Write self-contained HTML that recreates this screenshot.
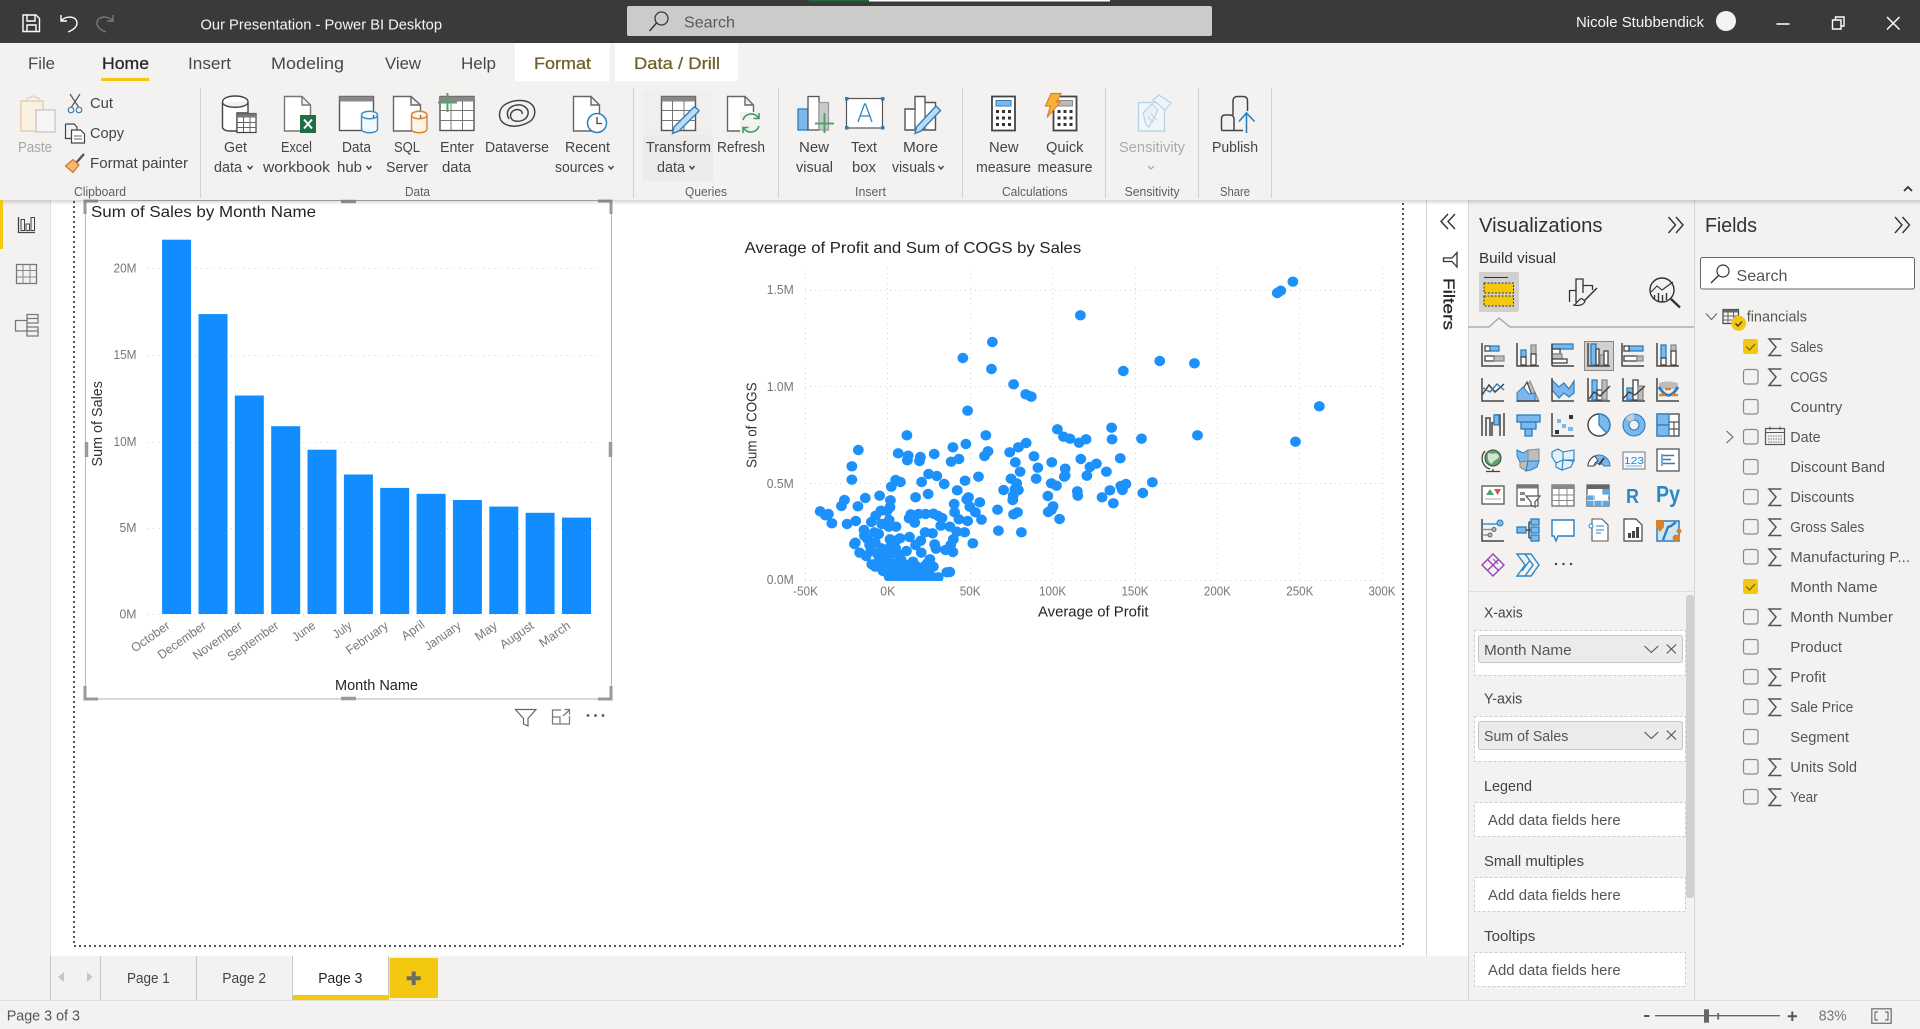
<!DOCTYPE html>
<html lang="en"><head><meta charset="utf-8"><title>Our Presentation - Power BI Desktop</title>
<style>
html,body{margin:0;padding:0;width:1920px;height:1029px;overflow:hidden;background:#fff}
svg{display:block}
text{font-family:"Liberation Sans",sans-serif;fill:#444;font-size:14px}
.tw{fill:#f5f5f5;font-size:14.5px}
.t{font-size:16.5px;fill:#4a4847}
.fm{font-size:16.5px;fill:#6f5f28}
.g{font-size:12.5px;fill:#605e5c}
.f{font-size:14.5px;fill:#555}
.p{font-size:14.5px;fill:#444}
.l{font-size:12.5px;fill:#777}
.c{font-size:14.5px;fill:#333}
.h{font-size:20px;fill:#323130}
.k,.k *{fill:none;stroke:#444;stroke-width:1.5}
.w{fill:#fff;stroke:#444;stroke-width:1.3}
.B{fill:#7ab8ee;stroke:#2b7fbd;stroke-width:1.3}
.G{fill:#bdbdbd;stroke:#858585;stroke-width:1.2}
.bl{fill:none;stroke:#2b7fbd;stroke-width:1.4}
.cb{fill:none;stroke:#8a8886;stroke-width:1.2}
.cy{fill:#f2c811}
.s{fill:none;stroke:#555;stroke-width:1.5}
.d{fill:#fff;stroke:#d0cecc;stroke-width:1;stroke-dasharray:3 2}
.pl{fill:#edebe9;stroke:#c8c6c4;stroke-width:1}
.sc ellipse{rx:12.4px;ry:15.6px;fill:#1c90fb}
</style></head><body>
<svg width="1920" height="1029" viewBox="0 0 1920 1029" xmlns="http://www.w3.org/2000/svg">
<!-- backgrounds -->
<rect width="1920" height="1029" fill="#f3f2f1"/>
<rect x="51" y="200" width="1417" height="756" fill="#fff"/>
<path d="M1426.5 200V956M1468.5 200V1000M1694.5 200V1000" stroke="#d8d6d4" fill="none"/>
<path d="M50.5 200V1000" stroke="#e4e2e0"/>
<path d="M74 201V946H1403V201" fill="none" stroke="#555" stroke-width="2" stroke-dasharray="2 3"/>

<!-- chart 1 -->
<rect x="85.5" y="200.5" width="526" height="498.5" fill="#fff" stroke="#b5b5b5"/>
<path d="M85 214V201H98M598 201H611V214M85 686V699H98M598 699H611V686" fill="none" stroke="#9a9a9a" stroke-width="3"/>
<path d="M341 201.5H356M341 698.5H356M86.5 442V457M610.5 442V457" stroke="#9a9a9a" stroke-width="3.5"/>
<text x="91" y="217" textLength="225" lengthAdjust="spacingAndGlyphs" class="c" style="font-size:16px;fill:#252423">Sum of Sales by Month Name</text>
<path d="M147 268.5H603M147 355.5H603M147 442.5H603M147 528.5H603M147 614.5H603" stroke="#d4d4d4" stroke-dasharray="1 5"/>
<g fill="#118dff">
<rect x="162.1" y="239.7" width="29" height="374.3"/><rect x="198.5" y="314.1" width="29" height="299.9"/><rect x="234.8" y="395.5" width="29" height="218.5"/><rect x="271.2" y="426.2" width="29" height="187.8"/><rect x="307.5" y="449.7" width="29" height="164.3"/><rect x="343.9" y="474.5" width="29" height="139.5"/><rect x="380.2" y="487.9" width="29" height="126.1"/><rect x="416.6" y="493.8" width="29" height="120.2"/><rect x="452.9" y="500" width="29" height="114"/><rect x="489.3" y="506.6" width="29" height="107.4"/><rect x="525.6" y="512.8" width="29" height="101.2"/><rect x="562" y="517.6" width="29" height="96.4"/>
</g>
<g class="l" text-anchor="end">
<text x="136.5" y="272.5" class="l" text-anchor="end" textLength="23" lengthAdjust="spacingAndGlyphs">20M</text>
<text x="136.5" y="359" class="l" text-anchor="end" textLength="23" lengthAdjust="spacingAndGlyphs">15M</text>
<text x="136.5" y="446" class="l" text-anchor="end" textLength="23" lengthAdjust="spacingAndGlyphs">10M</text>
<text x="136.5" y="532" class="l" text-anchor="end" textLength="17" lengthAdjust="spacingAndGlyphs">5M</text>
<text x="136.5" y="618.5" class="l" text-anchor="end" textLength="17" lengthAdjust="spacingAndGlyphs">0M</text>
</g>
<text x="102" y="466.5" transform="rotate(-90 102 466.5)" textLength="85.5" lengthAdjust="spacingAndGlyphs" class="c" style="font-size:15px">Sum of Sales</text>
<text x="335" y="690" textLength="83" lengthAdjust="spacingAndGlyphs" class="c" style="font-size:15px;fill:#252423">Month Name</text>
<text class="l" text-anchor="end" x="170.8" y="627.5" transform="rotate(-35 170.8 627.5)" textLength="44" lengthAdjust="spacingAndGlyphs">October</text>
<text class="l" text-anchor="end" x="207.2" y="627.5" transform="rotate(-35 207.2 627.5)" textLength="56" lengthAdjust="spacingAndGlyphs">December</text>
<text class="l" text-anchor="end" x="243.2" y="627.5" transform="rotate(-35 243.2 627.5)" textLength="57" lengthAdjust="spacingAndGlyphs">November</text>
<text class="l" text-anchor="end" x="279.6" y="627.5" transform="rotate(-35 279.6 627.5)" textLength="59" lengthAdjust="spacingAndGlyphs">September</text>
<text class="l" text-anchor="end" x="316.3" y="627.5" transform="rotate(-35 316.3 627.5)" textLength="25" lengthAdjust="spacingAndGlyphs">June</text>
<text class="l" text-anchor="end" x="352.7" y="627.5" transform="rotate(-35 352.7 627.5)" textLength="20" lengthAdjust="spacingAndGlyphs">July</text>
<text class="l" text-anchor="end" x="389" y="627.5" transform="rotate(-35 389 627.5)" textLength="48" lengthAdjust="spacingAndGlyphs">February</text>
<text class="l" text-anchor="end" x="425.5" y="626.5" transform="rotate(-35 425.5 626.5)" textLength="25" lengthAdjust="spacingAndGlyphs">April</text>
<text class="l" text-anchor="end" x="461.8" y="627.5" transform="rotate(-35 461.8 627.5)" textLength="41" lengthAdjust="spacingAndGlyphs">January</text>
<text class="l" text-anchor="end" x="498.2" y="627.5" transform="rotate(-35 498.2 627.5)" textLength="24" lengthAdjust="spacingAndGlyphs">May</text>
<text class="l" text-anchor="end" x="534.6" y="627.5" transform="rotate(-35 534.6 627.5)" textLength="38" lengthAdjust="spacingAndGlyphs">August</text>
<text class="l" text-anchor="end" x="571.4" y="627.5" transform="rotate(-35 571.4 627.5)" textLength="35" lengthAdjust="spacingAndGlyphs">March</text>
<!-- visual header -->
<path d="M515.5 709.5H536L528 718.5V726L523.5 724V718.5Z" fill="none" stroke="#666" stroke-width="1.2"/>
<path d="M561 710H552.5V724H569.5V716M552.5 717H560V724M563 716L569.5 710M564.5 709.5H569.5V714.5" fill="none" stroke="#777" stroke-width="1.2"/>
<circle cx="588" cy="715.5" r="1.4" fill="#555"/><circle cx="595.5" cy="715.5" r="1.4" fill="#555"/><circle cx="603" cy="715.5" r="1.4" fill="#555"/>

<!-- chart 2 -->
<text x="744.7" y="252.8" textLength="336.5" lengthAdjust="spacingAndGlyphs" class="c" style="font-size:16px;fill:#252423">Average of Profit and Sum of COGS by Sales</text>
<path d="M805.5 268V580M887.5 268V580M970.5 268V580M1052.5 268V580M1135.5 268V580M1217.5 268V580M1299.5 268V580M1382.5 268V580" stroke="#d6d6d6" stroke-dasharray="1 4"/>
<path d="M805 290.5H1382M805 386.5H1382M805 483.5H1382M805 580.5H1382" stroke="#d6d6d6" stroke-dasharray="1 4"/>
<svg class="sc" x="720" y="220" width="680" height="410" viewBox="0 0 1568 1230" preserveAspectRatio="none">
<ellipse cx="1321" cy="185"/><ellipse cx="1293" cy="212"/><ellipse cx="1285" cy="219"/><ellipse cx="831" cy="286"/><ellipse cx="628" cy="366"/><ellipse cx="560" cy="414"/><ellipse cx="626" cy="447"/><ellipse cx="1014" cy="423"/><ellipse cx="1094" cy="430"/><ellipse cx="930" cy="453"/><ellipse cx="677" cy="493"/><ellipse cx="705" cy="523"/><ellipse cx="716" cy="529"/><ellipse cx="718" cy="530"/><ellipse cx="1382" cy="559"/><ellipse cx="571" cy="572"/><ellipse cx="1101" cy="646"/><ellipse cx="1327" cy="665"/><ellipse cx="903" cy="623"/><ellipse cx="778" cy="628"/><ellipse cx="792" cy="650"/><ellipse cx="807" cy="656"/><ellipse cx="828" cy="668"/><ellipse cx="844" cy="658"/><ellipse cx="904" cy="658"/><ellipse cx="972" cy="656"/><ellipse cx="431" cy="646"/><ellipse cx="613" cy="646"/><ellipse cx="567" cy="672"/><ellipse cx="706" cy="669"/><ellipse cx="688" cy="682"/><ellipse cx="668" cy="697"/><ellipse cx="537" cy="682"/><ellipse cx="319" cy="690"/><ellipse cx="411" cy="700"/><ellipse cx="434" cy="707"/><ellipse cx="462" cy="711"/><ellipse cx="494" cy="702"/><ellipse cx="618" cy="694"/><ellipse cx="610" cy="708"/><ellipse cx="724" cy="709"/><ellipse cx="681" cy="727"/><ellipse cx="765" cy="727"/><ellipse cx="832" cy="717"/><ellipse cx="923" cy="715"/><ellipse cx="868" cy="731"/><ellipse cx="853" cy="741"/><ellipse cx="891" cy="755"/><ellipse cx="432" cy="721"/><ellipse cx="460" cy="723"/><ellipse cx="533" cy="725"/><ellipse cx="551" cy="717"/><ellipse cx="304" cy="739"/><ellipse cx="304" cy="779"/><ellipse cx="692" cy="755"/><ellipse cx="733" cy="743"/><ellipse cx="796" cy="746"/><ellipse cx="796" cy="767"/><ellipse cx="794" cy="770"/><ellipse cx="846" cy="767"/><ellipse cx="481" cy="762"/><ellipse cx="500" cy="768"/><ellipse cx="405" cy="780"/><ellipse cx="416" cy="786"/><ellipse cx="596" cy="770"/><ellipse cx="565" cy="782"/><ellipse cx="671" cy="776"/><ellipse cx="729" cy="776"/><ellipse cx="764" cy="790"/><ellipse cx="776" cy="797"/><ellipse cx="936" cy="792"/><ellipse cx="924" cy="798"/><ellipse cx="928" cy="810"/><ellipse cx="997" cy="787"/><ellipse cx="465" cy="786"/><ellipse cx="395" cy="800"/><ellipse cx="517" cy="792"/><ellipse cx="547" cy="811"/><ellipse cx="684" cy="790"/><ellipse cx="680" cy="808"/><ellipse cx="688" cy="810"/><ellipse cx="654" cy="810"/><ellipse cx="824" cy="814"/><ellipse cx="825" cy="827"/><ellipse cx="899" cy="811"/><ellipse cx="975" cy="819"/><ellipse cx="881" cy="832"/><ellipse cx="907" cy="850"/><ellipse cx="756" cy="828"/><ellipse cx="676" cy="827"/><ellipse cx="675" cy="840"/><ellipse cx="368" cy="827"/><ellipse cx="335" cy="834"/><ellipse cx="287" cy="840"/><ellipse cx="280" cy="858"/><ellipse cx="318" cy="859"/><ellipse cx="393" cy="841"/><ellipse cx="451" cy="832"/><ellipse cx="480" cy="822"/><ellipse cx="573" cy="832"/><ellipse cx="569" cy="838"/><ellipse cx="599" cy="847"/><ellipse cx="540" cy="852"/><ellipse cx="576" cy="860"/><ellipse cx="392" cy="862"/><ellipse cx="371" cy="872"/><ellipse cx="385" cy="873"/><ellipse cx="231" cy="874"/><ellipse cx="243" cy="886"/><ellipse cx="250" cy="882"/><ellipse cx="258" cy="910"/><ellipse cx="293" cy="912"/><ellipse cx="313" cy="903"/><ellipse cx="359" cy="887"/><ellipse cx="349" cy="906"/><ellipse cx="373" cy="912"/><ellipse cx="390" cy="900"/><ellipse cx="406" cy="920"/><ellipse cx="389" cy="920"/><ellipse cx="440" cy="883"/><ellipse cx="436" cy="895"/><ellipse cx="449" cy="908"/><ellipse cx="458" cy="882"/><ellipse cx="474" cy="882"/><ellipse cx="492" cy="881"/><ellipse cx="503" cy="888"/><ellipse cx="512" cy="894"/><ellipse cx="509" cy="917"/><ellipse cx="541" cy="877"/><ellipse cx="551" cy="898"/><ellipse cx="571" cy="903"/><ellipse cx="589" cy="877"/><ellipse cx="603" cy="899"/><ellipse cx="640" cy="869"/><ellipse cx="677" cy="883"/><ellipse cx="686" cy="877"/><ellipse cx="768" cy="859"/><ellipse cx="764" cy="870"/><ellipse cx="757" cy="876"/><ellipse cx="783" cy="897"/><ellipse cx="642" cy="932"/><ellipse cx="695" cy="937"/><ellipse cx="332" cy="930"/><ellipse cx="333" cy="947"/><ellipse cx="356" cy="937"/><ellipse cx="366" cy="942"/><ellipse cx="340" cy="957"/><ellipse cx="345" cy="975"/><ellipse cx="358" cy="967"/><ellipse cx="312" cy="968"/><ellipse cx="310" cy="972"/><ellipse cx="322" cy="998"/><ellipse cx="337" cy="1008"/><ellipse cx="350" cy="1033"/><ellipse cx="363" cy="1002"/><ellipse cx="358" cy="1040"/><ellipse cx="376" cy="1053"/><ellipse cx="392" cy="958"/><ellipse cx="405" cy="962"/><ellipse cx="415" cy="955"/><ellipse cx="437" cy="951"/><ellipse cx="463" cy="962"/><ellipse cx="473" cy="937"/><ellipse cx="490" cy="940"/><ellipse cx="530" cy="920"/><ellipse cx="546" cy="935"/><ellipse cx="564" cy="937"/><ellipse cx="583" cy="970"/><ellipse cx="538" cy="958"/><ellipse cx="532" cy="975"/><ellipse cx="520" cy="990"/><ellipse cx="537" cy="996"/><ellipse cx="495" cy="973"/><ellipse cx="498" cy="986"/><ellipse cx="451" cy="975"/><ellipse cx="464" cy="998"/><ellipse cx="430" cy="993"/><ellipse cx="393" cy="980"/><ellipse cx="395" cy="1000"/><ellipse cx="375" cy="1005"/><ellipse cx="382" cy="1020"/><ellipse cx="398" cy="1030"/><ellipse cx="418" cy="1020"/><ellipse cx="445" cy="1025"/><ellipse cx="484" cy="1018"/><ellipse cx="478" cy="1030"/><ellipse cx="470" cy="1040"/><ellipse cx="523" cy="1057"/><ellipse cx="530" cy="1056"/><ellipse cx="503" cy="1072"/>
<ellipse cx="365" cy="1025"/><ellipse cx="385" cy="1045"/><ellipse cx="405" cy="1045"/><ellipse cx="420" cy="1040"/><ellipse cx="435" cy="1050"/><ellipse cx="455" cy="1052"/><ellipse cx="475" cy="1052"/><ellipse cx="348" cy="992"/><ellipse cx="372" cy="985"/><ellipse cx="405" cy="985"/><ellipse cx="380" cy="1000"/><ellipse cx="412" cy="1005"/><ellipse cx="372" cy="1035"/><ellipse cx="392" cy="1052"/><ellipse cx="430" cy="1035"/><ellipse cx="452" cy="1038"/><ellipse cx="492" cy="1040"/><ellipse cx="390" cy="1070"/><ellipse cx="402" cy="1068"/><ellipse cx="414" cy="1068"/><ellipse cx="426" cy="1068"/><ellipse cx="438" cy="1068"/><ellipse cx="450" cy="1068"/><ellipse cx="462" cy="1068"/><ellipse cx="474" cy="1068"/><ellipse cx="486" cy="1068"/><ellipse cx="396" cy="1076"/><ellipse cx="408" cy="1076"/><ellipse cx="420" cy="1076"/><ellipse cx="432" cy="1076"/><ellipse cx="444" cy="1076"/><ellipse cx="456" cy="1076"/><ellipse cx="468" cy="1076"/><ellipse cx="480" cy="1076"/><ellipse cx="490" cy="1076"/>
</svg>
<rect x="860" y="581" width="85" height="7" fill="#fff"/>
<text class="l" text-anchor="end" x="793.7" y="294" textLength="27" lengthAdjust="spacingAndGlyphs">1.5M</text>
<text class="l" text-anchor="end" x="793.7" y="391" textLength="27" lengthAdjust="spacingAndGlyphs">1.0M</text>
<text class="l" text-anchor="end" x="793.7" y="488" textLength="27" lengthAdjust="spacingAndGlyphs">0.5M</text>
<text class="l" text-anchor="end" x="793.7" y="584" textLength="27" lengthAdjust="spacingAndGlyphs">0.0M</text>
<text class="l" text-anchor="middle" x="805.5" y="595.5" textLength="25" lengthAdjust="spacingAndGlyphs">-50K</text>
<text class="l" text-anchor="middle" x="887.8" y="595.5" textLength="15" lengthAdjust="spacingAndGlyphs">0K</text>
<text class="l" text-anchor="middle" x="970.2" y="595.5" textLength="21" lengthAdjust="spacingAndGlyphs">50K</text>
<text class="l" text-anchor="middle" x="1052.6" y="595.5" textLength="27" lengthAdjust="spacingAndGlyphs">100K</text>
<text class="l" text-anchor="middle" x="1135" y="595.5" textLength="27" lengthAdjust="spacingAndGlyphs">150K</text>
<text class="l" text-anchor="middle" x="1217.4" y="595.5" textLength="27" lengthAdjust="spacingAndGlyphs">200K</text>
<text class="l" text-anchor="middle" x="1299.8" y="595.5" textLength="27" lengthAdjust="spacingAndGlyphs">250K</text>
<text class="l" text-anchor="middle" x="1382" y="595.5" textLength="27" lengthAdjust="spacingAndGlyphs">300K</text>
<text x="1038" y="616.5" textLength="110.5" lengthAdjust="spacingAndGlyphs" class="c" style="font-size:15px;fill:#252423">Average of Profit</text>
<text x="756.5" y="468" transform="rotate(-90 756.5 468)" textLength="85.5" lengthAdjust="spacingAndGlyphs" class="c" style="font-size:15px">Sum of COGS</text>

<!-- ribbon shadow -->
<defs><linearGradient id="sh" x1="0" y1="0" x2="0" y2="1"><stop offset="0" stop-color="#000" stop-opacity=".16"/><stop offset="1" stop-color="#000" stop-opacity="0"/></linearGradient></defs>
<rect y="200" width="1920" height="5" fill="url(#sh)"/>
<!-- title bar -->
<rect width="1920" height="43" fill="#3b3a39"/>
<rect x="809" width="60" height="1.5" fill="#1d6b2c"/><rect x="869" width="241" height="1.5" fill="#fff"/>
<rect x="627" y="6" width="585" height="30" rx="2" fill="#cbcbc9"/>
<g fill="none" stroke="#fff" stroke-width="1.4">
<path d="M23 15H36L39.5 18.5V31.5H23ZM27 15V21H35V15M27 31.5V25H36V31.5"/>
<path d="M61 15V21H67M61 21C66 15 77 16 77 23C77 27 73 30 68 32"/>
</g>
<path d="M113 15V21H107M113 21C108 15 97 16 97 23C97 27 101 30 106 32" fill="none" stroke="#7a7978" stroke-width="1.4"/>
<text x="200.5" y="29.5" textLength="241.5" lengthAdjust="spacingAndGlyphs" class="tw">Our Presentation - Power BI Desktop</text>
<circle cx="661.5" cy="18.5" r="6.5" fill="none" stroke="#3b3a39" stroke-width="1.3"/><path d="M656.5 23L649.5 31" stroke="#3b3a39" stroke-width="1.5"/>
<text x="684" y="27.5" textLength="51" lengthAdjust="spacingAndGlyphs" style="font-size:16px;fill:#5a5958">Search</text>
<text x="1576" y="27" textLength="128" lengthAdjust="spacingAndGlyphs" class="tw">Nicole Stubbendick</text>
<ellipse cx="1726" cy="21" rx="10" ry="10" fill="#f3f3f3"/>
<path d="M1776.5 24H1789.5" stroke="#fff" stroke-width="1.5"/>
<path d="M1832.5 20H1841V29H1832.5ZM1835.5 20V17H1844V26H1841" fill="none" stroke="#fff" stroke-width="1.4"/>
<path d="M1887 17L1899.5 29.5M1899.5 17L1887 29.5" stroke="#fff" stroke-width="1.5"/>

<!-- tabs -->
<rect x="515" y="43" width="95" height="38" fill="#fff"/><rect x="615" y="43" width="123" height="38" fill="#fff"/>
<rect x="101" y="78" width="48" height="3" fill="#f2c811"/>
<text x="28" y="69" textLength="27" lengthAdjust="spacingAndGlyphs" class="t">File</text>
<text x="102" y="69" textLength="47" lengthAdjust="spacingAndGlyphs" class="t" style="fill:#252423;stroke:#252423;stroke-width:.25">Home</text>
<text x="188" y="69" textLength="43" lengthAdjust="spacingAndGlyphs" class="t">Insert</text>
<text x="271" y="69" textLength="73" lengthAdjust="spacingAndGlyphs" class="t">Modeling</text>
<text x="385" y="69" textLength="36" lengthAdjust="spacingAndGlyphs" class="t">View</text>
<text x="461" y="69" textLength="35" lengthAdjust="spacingAndGlyphs" class="t">Help</text>
<text x="534" y="69" textLength="57" lengthAdjust="spacingAndGlyphs" class="fm" style="stroke:#6f5f28;stroke-width:.25">Format</text>
<text x="634" y="69" textLength="86" lengthAdjust="spacingAndGlyphs" class="fm" style="stroke:#6f5f28;stroke-width:.25">Data / Drill</text>

<!-- ribbon separators -->
<path d="M200.5 88V198M633.5 88V198M778.5 88V198M962.5 88V198M1105.5 88V198M1198.5 88V198M1271.5 88V198" stroke="#d2d0ce"/>
<rect x="643" y="91" width="70" height="44" fill="#f0efee"/><rect x="643" y="135" width="70" height="46" fill="#ecebe9"/>

<!-- clipboard group -->
<rect x="21" y="101" width="22" height="30" fill="#faf1e4" stroke="#e9cda8" stroke-width="1.5"/><path d="M27 101V98H30L32 96H34L36 98H39V101Z" fill="#f6f2ec" stroke="#d9c9b3"/><rect x="36" y="110" width="19" height="22" fill="#f6f6f6" stroke="#ccc" stroke-width="1.5"/>
<path d="M70 94L78.5 107M80 94L71.5 107" stroke="#555" fill="none" stroke-width="1.2"/><circle cx="71" cy="110" r="2.8" fill="none" stroke="#2b7fbd" stroke-width="1.2"/><circle cx="79" cy="110" r="2.8" fill="none" stroke="#2b7fbd" stroke-width="1.2"/>
<path d="M65.5 124H74L77 127V130M71 138.5H65.5V124" fill="none" stroke="#444" stroke-width="1.2"/><path d="M71.5 130H80.5L84.5 134V143H71.5Z" fill="#fff" stroke="#444" stroke-width="1.2"/><path d="M74 136H82M74 139H82" stroke="#666"/>
<path d="M84 154L76 163" stroke="#555" stroke-width="2.4"/><path d="M65.5 166L73 159.5L79 165L73 172.5Z" fill="#f7b76f" stroke="#c9792d" stroke-width="1.2"/>
<text x="18" y="152" textLength="34" lengthAdjust="spacingAndGlyphs" class="p" style="fill:#a6a6a6">Paste</text>
<text x="90" y="108" textLength="23" lengthAdjust="spacingAndGlyphs" class="p">Cut</text>
<text x="90" y="138" textLength="34" lengthAdjust="spacingAndGlyphs" class="p">Copy</text>
<text x="90" y="168" textLength="98" lengthAdjust="spacingAndGlyphs" class="p">Format painter</text>
<text x="74" y="196" textLength="52" lengthAdjust="spacingAndGlyphs" class="g">Clipboard</text>

<!-- data group icons -->
<path d="M222.5 102C222.5 94 248 94 248 102V113H237V131H230C225 131 222.5 129 222.5 127ZM222.5 102C222.5 109 248 109 248 102" fill="#fff" stroke="#444" stroke-width="1.4"/>
<rect x="237" y="113.5" width="19" height="19" fill="#fff" stroke="#444" stroke-width="1.2"/><rect x="237" y="113.5" width="19" height="4" fill="#777"/><path d="M243.5 117V132M250 117V132M237 122.5H256M237 127.5H256" stroke="#666"/>
<path d="M284.5 96.5H302L310.5 105V131H284.5ZM302 96.5V105H310.5" fill="#fff" stroke="#777" stroke-width="1.4"/>
<rect x="300" y="115" width="16" height="18" fill="#1d7044"/><path d="M304 119.5L312 128.5M312 119.5L304 128.5" stroke="#fff" stroke-width="2"/>
<rect x="339.5" y="96.5" width="34" height="34" fill="#fff" stroke="#555" stroke-width="1.4"/><rect x="339.5" y="96.5" width="34" height="5" fill="#8a8886"/>
<path d="M361.5 115C361.5 110 377.5 110 377.5 115V129C377.5 134 361.5 134 361.5 129ZM361.5 115C361.5 120 377.5 120 377.5 115" fill="#f1f8fe" stroke="#3a8cc6" stroke-width="1.4"/>
<path d="M393.5 96.5H411L420.5 105V131H393.5ZM411 96.5V105H420.5" fill="#fff" stroke="#666" stroke-width="1.4"/>
<path d="M411.5 115C411.5 110 427 110 427 115V129C427 134 411.5 134 411.5 129ZM411.5 115C411.5 120 427 120 427 115" fill="#fdf3e6" stroke="#d9822b" stroke-width="1.4"/>
<rect x="440" y="96.5" width="34" height="34" fill="#fff" stroke="#555" stroke-width="1.4"/><rect x="440" y="96.5" width="34" height="5" fill="#8a8886"/><path d="M451 101V130M462.5 101V130M440 110.5H474M440 120.5H474" stroke="#777"/>
<path d="M447.5 93V112M438 102.5H457" stroke="#4fa36a" stroke-width="2"/>
<g fill="none" stroke="#444" stroke-width="1.5"><path d="M505 124C497 120 498 108 506 104C513 100 524 99 530 103C537 108 536 118 529 122C522 126 512 128 505 124Z"/><path d="M509 119C505 112 509 106 517 105C524 104 529 109 528 114C527 120 520 122 515 121C510 120 509 114 513 111C517 108 523 110 522 114"/></g>
<path d="M573.5 96.5H591L599.5 105V131H573.5ZM591 96.5V105H599.5" fill="#fff" stroke="#666" stroke-width="1.4"/>
<circle cx="597" cy="123" r="9.5" fill="#fff" stroke="#2b7fbd" stroke-width="1.5"/><path d="M597 117V123.5H602" fill="none" stroke="#444" stroke-width="1.3"/>
<text x="224" y="152" textLength="23" lengthAdjust="spacingAndGlyphs" class="p">Get</text><text x="214" y="172" textLength="28" lengthAdjust="spacingAndGlyphs" class="p">data</text>
<text x="281" y="152" textLength="31" lengthAdjust="spacingAndGlyphs" class="p">Excel</text><text x="263" y="172" textLength="67" lengthAdjust="spacingAndGlyphs" class="p">workbook</text>
<text x="342" y="152" textLength="29" lengthAdjust="spacingAndGlyphs" class="p">Data</text><text x="337" y="172" textLength="25" lengthAdjust="spacingAndGlyphs" class="p">hub</text>
<text x="394" y="152" textLength="26" lengthAdjust="spacingAndGlyphs" class="p">SQL</text><text x="386" y="172" textLength="42" lengthAdjust="spacingAndGlyphs" class="p">Server</text>
<text x="440" y="152" textLength="34" lengthAdjust="spacingAndGlyphs" class="p">Enter</text><text x="442" y="172" textLength="29" lengthAdjust="spacingAndGlyphs" class="p">data</text>
<text x="485" y="152" textLength="64" lengthAdjust="spacingAndGlyphs" class="p">Dataverse</text>
<text x="565" y="152" textLength="45" lengthAdjust="spacingAndGlyphs" class="p">Recent</text><text x="555" y="172" textLength="49" lengthAdjust="spacingAndGlyphs" class="p">sources</text>
<g fill="none" stroke="#444" stroke-width="1.4"><path d="M247.5 166L250 169L252.5 166M366.5 166L369 169L371.5 166M608.5 166L611 169L613.5 166M689.5 166L692 169L694.5 166M938.5 166L941 169L943.5 166"/></g>
<text x="405" y="196" textLength="25" lengthAdjust="spacingAndGlyphs" class="g">Data</text>

<!-- queries -->
<rect x="661.5" y="96.5" width="34" height="34" fill="#fff" stroke="#555" stroke-width="1.4"/><rect x="661.5" y="96.5" width="34" height="5" fill="#8a8886"/><path d="M672.5 101V130M684 101V130M661.5 110.5H695.5M661.5 120.5H695.5" stroke="#777"/>
<path d="M697 108.5L699 111L679 131L672.5 133.5L674 127L694 107Z" fill="#bcdcf5" stroke="#2b7fbd" stroke-width="1.4"/>
<path d="M727.5 96.5H745L753.5 105V131H727.5ZM745 96.5V105H753.5" fill="#fff" stroke="#666" stroke-width="1.4"/>
<rect x="740" y="112" width="22" height="22" fill="#f3f2f1"/>
<path d="M743 120A8.5 8.5 0 0 1 758 117.5M759 126A8.5 8.5 0 0 1 744 128.5M759 113V118.5H753.5M743 133V127.5H748.5" fill="none" stroke="#3f9c5f" stroke-width="1.6"/>
<text x="646" y="152" textLength="65" lengthAdjust="spacingAndGlyphs" class="p">Transform</text><text x="657" y="172" textLength="28" lengthAdjust="spacingAndGlyphs" class="p">data</text>
<text x="717" y="152" textLength="48" lengthAdjust="spacingAndGlyphs" class="p">Refresh</text>
<text x="685" y="196" textLength="42" lengthAdjust="spacingAndGlyphs" class="g">Queries</text>

<!-- insert -->
<rect x="798" y="109" width="10" height="21" fill="#7ab8ee" stroke="#2b7fbd" stroke-width="1.3"/><rect x="808" y="96.5" width="11" height="33.5" fill="#fff" stroke="#555" stroke-width="1.3"/><rect x="819" y="102.5" width="9.5" height="27.5" fill="#c9c9c9" stroke="#999" stroke-width="1.2"/>
<path d="M824.5 113V133M815 123.5H834" stroke="#4fa36a" stroke-width="2"/>
<rect x="846.5" y="98.5" width="36" height="29.5" fill="#fff" stroke="#555" stroke-width="1.2"/><rect x="845" y="97" width="3.5" height="3.5" fill="#2b7fbd"/><rect x="881" y="97" width="3.5" height="3.5" fill="#2b7fbd"/><rect x="845" y="126" width="3.5" height="3.5" fill="#2b7fbd"/><rect x="881" y="126" width="3.5" height="3.5" fill="#2b7fbd"/>
<path d="M858 122L864.5 104H865.5L872 122M860.5 116H869.5" fill="none" stroke="#2b88c8" stroke-width="1.3"/>
<path d="M905 130V109H915V96.5H925V102.5H935.5V130Z" fill="#fff" stroke="#555" stroke-width="1.4"/><path d="M915 109V130M925 102.5V130" stroke="#555" stroke-width="1.2"/>
<path d="M938 108L940.5 110.5L921 131L915 133.5L916.5 127L936 106Z" fill="#bcdcf5" stroke="#2b7fbd" stroke-width="1.4"/>
<text x="799" y="152" textLength="30" lengthAdjust="spacingAndGlyphs" class="p">New</text><text x="796" y="172" textLength="37" lengthAdjust="spacingAndGlyphs" class="p">visual</text>
<text x="851" y="152" textLength="26" lengthAdjust="spacingAndGlyphs" class="p">Text</text><text x="852" y="172" textLength="24" lengthAdjust="spacingAndGlyphs" class="p">box</text>
<text x="903" y="152" textLength="35" lengthAdjust="spacingAndGlyphs" class="p">More</text><text x="892" y="172" textLength="43" lengthAdjust="spacingAndGlyphs" class="p">visuals</text>
<text x="855" y="196" textLength="31" lengthAdjust="spacingAndGlyphs" class="g">Insert</text>

<!-- calculations -->
<rect x="992" y="96.5" width="23" height="34" fill="#fff" stroke="#444" stroke-width="1.8"/><rect x="996" y="100.5" width="15" height="5.5" fill="#7ab8ee" stroke="#2b7fbd"/><path d="M996 111.5H1011M996 118H1011M996 124.5H1011" stroke="#333" stroke-width="3" stroke-dasharray="3 3"/>
<rect x="1053.5" y="96.5" width="23" height="34" fill="#fff" stroke="#444" stroke-width="1.8"/><rect x="1057.5" y="100.5" width="15" height="5.5" fill="#bbb" stroke="#888"/><path d="M1057.5 111.5H1072.5M1057.5 118H1072.5M1057.5 124.5H1072.5" stroke="#333" stroke-width="3" stroke-dasharray="3 3"/>
<path d="M1051 93.5H1061L1056.5 102H1060.5L1047 117.5L1050.5 106H1045.5Z" fill="#f9b233" stroke="#d9822b" stroke-width="1.2"/>
<text x="989" y="152" textLength="29.5" lengthAdjust="spacingAndGlyphs" class="p">New</text><text x="976" y="172" textLength="55" lengthAdjust="spacingAndGlyphs" class="p">measure</text>
<text x="1046" y="152" textLength="37.5" lengthAdjust="spacingAndGlyphs" class="p">Quick</text><text x="1037.5" y="172" textLength="55" lengthAdjust="spacingAndGlyphs" class="p">measure</text>
<text x="1002" y="196" textLength="65.5" lengthAdjust="spacingAndGlyphs" class="g">Calculations</text>

<!-- sensitivity / share -->
<rect x="1138.5" y="102.5" width="26" height="28.5" fill="#f3f6f8" stroke="#b5d4e8" stroke-width="1.4"/>
<path d="M1143 113L1152 104L1158 110L1149 127L1146 125Z" fill="#e9f2f8" stroke="#b5d4e8" stroke-width="1.2"/><path d="M1153 100L1159 95L1171 103L1165 110Z" fill="#eef5fa" stroke="#b5d4e8" stroke-width="1.2"/><path d="M1148 117L1154 123M1151 114L1157 120" stroke="#b5d4e8"/>
<path d="M1148 166L1151 169L1154 166" fill="none" stroke="#aaa" stroke-width="1.3"/>
<text x="1119" y="152" textLength="66" lengthAdjust="spacingAndGlyphs" class="p" style="fill:#ababab">Sensitivity</text>
<text x="1124.6" y="196" textLength="55" lengthAdjust="spacingAndGlyphs" class="g">Sensitivity</text>
<path d="M1233 115V101C1233 98 1235 96.5 1237 96.5H1243C1246 96.5 1247.5 98 1247.5 101V111M1221.5 119C1221.5 116 1223 115 1225 115H1230C1233 115 1234 117 1234 119V130.5H1223C1222 130.5 1221.5 130 1221.5 129ZM1234 130.5H1243" fill="none" stroke="#444" stroke-width="1.5"/>
<path d="M1246.5 133V113M1239 121.5L1246.5 113L1254.5 121.5" fill="none" stroke="#2b7fbd" stroke-width="1.6"/>
<text x="1212" y="152" textLength="46" lengthAdjust="spacingAndGlyphs" class="p">Publish</text>
<text x="1220" y="196" textLength="30" lengthAdjust="spacingAndGlyphs" class="g">Share</text>
<path d="M1904 191L1908 187L1912 191" fill="none" stroke="#333" stroke-width="1.8"/>

<!-- left nav -->
<rect y="200" width="3" height="49" fill="#f2c811"/>
<path d="M18.5 217V232.5H35" fill="none" stroke="#444" stroke-width="1.3"/><rect x="21" y="219.5" width="3.5" height="11" fill="none" stroke="#444"/><rect x="26" y="224" width="3.5" height="6.5" fill="none" stroke="#444"/><rect x="31" y="217.5" width="3.5" height="13" fill="none" stroke="#444"/>
<rect x="16.5" y="264.5" width="20" height="19" fill="none" stroke="#777" stroke-width="1.3"/><path d="M16.5 270.5H36.5M16.5 277H36.5M23 264.5V283.5M30 264.5V283.5" stroke="#888"/>
<path d="M27 314.5H38V323H27ZM27 327H38V336H27ZM15.5 320.5H27V331H15.5ZM27 318.5H38M27 331H38" fill="none" stroke="#777" stroke-width="1.3"/>

<!-- filters -->
<path d="M1448 214L1441 221.5L1448 229M1455 214L1448 221.5L1455 229" fill="none" stroke="#333" stroke-width="1.4"/>
<path d="M1457 252.5V267L1452 261.5H1443.5V258H1452Z" fill="none" stroke="#333" stroke-width="1.3"/>
<text x="1443.5" y="278" transform="rotate(90 1443.5 278)" textLength="52" lengthAdjust="spacingAndGlyphs" style="font-size:16px;fill:#252423;stroke:#252423;stroke-width:.3">Filters</text>

<!-- visualizations header -->
<text x="1479" y="232" textLength="123.5" lengthAdjust="spacingAndGlyphs" class="h">Visualizations</text>
<path d="M1668.5 217L1675.5 225L1668.5 233M1676 217L1683 225L1676 233" fill="none" stroke="#333" stroke-width="1.4"/>
<text x="1705" y="232" textLength="52" lengthAdjust="spacingAndGlyphs" class="h">Fields</text>
<path d="M1895 217L1902 225L1895 233M1902.5 217L1909.5 225L1902.5 233" fill="none" stroke="#333" stroke-width="1.4"/>
<text x="1479" y="262.8" textLength="77" lengthAdjust="spacingAndGlyphs" class="p" style="fill:#333">Build visual</text>
<rect x="1479" y="272" width="40" height="40" rx="2" fill="#d2d0ce"/>
<path d="M1484 277.5H1508" stroke="#333"/>
<rect x="1484" y="283" width="29.5" height="10" fill="#f2c811" stroke="#333" stroke-dasharray="2 1.5"/><rect x="1484" y="296" width="29.5" height="10" fill="#f2c811" stroke="#333" stroke-dasharray="2 1.5"/>
<path d="M1569.5 302V290.5H1576V279H1583V285.5H1592.5V290M1576 290.5V302H1578M1583 285.5V293" fill="none" stroke="#333" stroke-width="1.3"/>
<path d="M1597 288L1584 301" stroke="#333" stroke-width="1.5"/><path d="M1574 305C1578 306 1583 305.5 1585 301.5L1582 298.5C1578 299 1578 303 1574 305Z" fill="#f3f2f1" stroke="#333" stroke-width="1.2"/>
<circle cx="1662" cy="290" r="12" fill="none" stroke="#333" stroke-width="1.4"/><path d="M1671 299L1680 307.5" stroke="#333" stroke-width="2.4"/><path d="M1651 292L1657 286L1662 290L1673 282" fill="none" stroke="#333" stroke-width="1.1"/><path d="M1654.5 295V300M1658.5 293V301.5M1662.5 295V301.5M1666.5 293V300" stroke="#333" stroke-width="1.4"/>
<path d="M1468 327H1489L1499 318L1510 327H1694" fill="none" stroke="#a19f9d" stroke-width="1.2"/>

<!-- viz grid row 1 -->
<rect x="1584.5" y="341.5" width="29" height="29" fill="#d2d0ce" stroke="#8a8886"/>
<g transform="translate(1493 355)"><path class="k" d="M-11-12V11H11"/><rect class="w" x="-8" y="-9" width="5" height="5"/><rect class="B" x="-3" y="-9" width="9" height="5"/><rect class="w" x="-8" y="1" width="9" height="5"/><rect class="G" x="1" y="1" width="10" height="5"/></g>
<g transform="translate(1528 355)"><path class="k" d="M-11-12V11H11"/><rect class="B" x="-7" y="-5" width="5" height="7"/><rect class="w" x="-7" y="2" width="5" height="8"/><rect class="G" x="3" y="-10" width="5" height="9"/><rect class="w" x="3" y="-1" width="5" height="11"/></g>
<g transform="translate(1563 355)"><rect class="B" x="-11" y="-11" width="21" height="5"/><rect class="w" x="-11" y="-6" width="8" height="5" stroke-width="1"/><rect class="G" x="-11" y="-1" width="10" height="5"/><rect class="w" x="-11" y="4" width="15" height="4"/><path class="k" d="M-11 11H11M-11-11V11"/></g>
<g transform="translate(1599 355)"><path class="k" d="M-11-12V11H11"/><rect class="B" x="-8" y="-11" width="5" height="21"/><rect class="w" x="-3" y="-6" width="3" height="16" /><rect class="G" x="1" y="0" width="4" height="10"/><rect class="w" x="5" y="-4" width="4" height="14"/></g>
<g transform="translate(1633 355)"><path class="k" d="M-11-12V11H11"/><rect class="B" x="-4" y="-9" width="14" height="5"/><rect class="w" x="-9" y="-9" width="5" height="5"/><rect class="w" x="-9" y="1" width="13" height="5"/><rect class="G" x="4" y="1" width="6" height="5"/></g>
<g transform="translate(1668 355)"><path class="k" d="M-11-12V11H11"/><rect class="B" x="-7" y="-10" width="5" height="13"/><rect class="w" x="-7" y="3" width="5" height="7"/><rect class="G" x="3" y="-10" width="5" height="6"/><rect class="w" x="3" y="-4" width="5" height="14"/></g>
<!-- row 2 -->
<g transform="translate(1493 390)"><path class="k" d="M-11-12V11H11"/><path class="k" d="M-11 5L-4-5L2 2L11-6" style="stroke:#444"/><path class="bl" d="M-10-2L-3 2L4-6L11 0"/></g>
<g transform="translate(1528 390)"><path d="M-11 11L2-9L11 11Z" fill="#bdbdbd" stroke="#888"/><path d="M-11 11L-5-1L-1-8L6 11Z" fill="#fff" stroke="#444" stroke-width="1.2"/><path d="M-11 11V3L-5-3L1 4L7 3V11Z" fill="#7ab8ee" stroke="#2b7fbd"/><path class="k" d="M-11 11H11"/></g>
<g transform="translate(1563 390)"><path d="M-11-10L-4-3L1-7L6-1L11-9V3L6 7L1 3L-4 8L-11 0Z" fill="#7ab8ee" stroke="#2b7fbd" stroke-width="1.2"/><path class="k" d="M-11-12V11H11"/></g>
<g transform="translate(1599 390)"><path class="k" d="M-11-12V11H11"/><rect class="B" x="-7" y="-10" width="5" height="20"/><rect class="w" x="-2" y="0" width="5" height="10"/><rect class="G" x="3" y="-10" width="5" height="20"/><path class="k" d="M-10 9L-5 2L1 6L11-4"/></g>
<g transform="translate(1634 390)"><path class="k" d="M-11-12V11H11"/><rect class="B" x="-7" y="-2" width="6" height="12"/><rect class="w" x="-1" y="-10" width="5" height="20"/><rect class="G" x="4" y="-4" width="5" height="14"/><path class="k" d="M-11 9L-5 2L1 5L11-4"/></g>
<g transform="translate(1668 390)"><path class="k" d="M-11-12V11H11"/><path d="M-9-7C-4-9 4-9 10-7V-1H-9Z" fill="#bdbdbd"/><path d="M-9-3C-2 8 3 8 10-3" fill="none" stroke="#2b7fbd" stroke-width="3"/><path d="M-9 5H-3M4 5H10M-3-1H3" stroke="#d9822b" stroke-width="2.5"/></g>
<!-- row 3 -->
<g transform="translate(1493 425)"><path class="k" d="M-11-10V11M11-12V11"/><path class="k" d="M-7 11V-7H-3V11M-1 11V-2L3-3V-10H7V11"/><rect class="B" x="1" y="-10" width="5" height="10"/></g>
<g transform="translate(1528 425)"><rect class="B" x="-11" y="-10" width="23" height="7"/><rect class="B" x="-7" y="-3" width="15" height="7"/><rect class="B" x="-3" y="4" width="7" height="7"/></g>
<g transform="translate(1563 425)"><path class="k" d="M-11-12V11H11"/><rect x="-6" y="-6" width="4" height="4" fill="#7ab8ee"/><rect x="6" y="-10" width="4" height="4" fill="#333"/><rect x="-1" y="-1" width="4" height="4" fill="#7ab8ee"/><rect x="-8" y="5" width="4" height="4" fill="#333"/><rect x="5" y="2" width="5" height="4" fill="#7ab8ee"/></g>
<g transform="translate(1599 425)"><circle r="11" fill="#fff" stroke="#444" stroke-width="1.4"/><path d="M0-11A11 11 0 0 1 7.5 8L0 0Z" fill="#7ab8ee" stroke="#2b7fbd" stroke-width="1.3"/></g>
<g transform="translate(1634 425)"><circle r="8" fill="none" stroke="#7ab8ee" stroke-width="6"/><circle r="11" fill="none" stroke="#2b7fbd" stroke-width="1.1"/><circle r="5" fill="#f3f2f1" stroke="#2b7fbd" stroke-width="1.1"/><path d="M0-8A8 8 0 0 0-6-5" fill="none" stroke="#ccc" stroke-width="6"/></g>
<g transform="translate(1668 425)"><rect x="-11" y="-11" width="22" height="22" fill="#fff" stroke="#444" stroke-width="1.3"/><rect x="-11" y="-11" width="12" height="11" class="B"/><rect x="-11" y="0" width="12" height="11" class="B"/><path d="M1-3H11M6-3V11M1 4H11" stroke="#555" stroke-width="1.2"/></g>
<!-- row 4 -->
<g transform="translate(1493 460)"><circle cy="-2" r="8" fill="#5aa469" stroke="#444"/><path d="M-5-7C0-5 5-9 6-3C3 1 0 0-1 4C-4 3-6 0-5-7Z" fill="#cfe6d4"/><path d="M-8-9A11 11 0 0 0-3 9" fill="none" stroke="#444" stroke-width="1.3"/><path d="M0 9V11M-7 11.5H7" stroke="#444" stroke-width="1.3"/></g>
<g transform="translate(1528 460)"><path d="M-11-10L-5-7L0-10L0 1L-8 2L-11-4Z" fill="#7ab8ee" stroke="#2b7fbd"/><path d="M0-10L11-11V1L0 1Z" fill="#bdbdbd" stroke="#888"/><path d="M-8 2L0 1L-2 11L-8 7Z" fill="#bdbdbd" stroke="#888"/><path d="M0 1H11L9 7L3 10L-2 11Z" fill="#7ab8ee" stroke="#2b7fbd"/></g>
<g transform="translate(1563 460)"><path d="M-11-8L-5-11L0-8L0 0L-7 3L-11-3ZM0-8L11-10V1L0 0ZM-7 3L0 0L-1 10L-7 7ZM0 0H11L8 7L-1 10Z" fill="#e4f1fb" stroke="#2b7fbd" stroke-width="1.1"/></g>
<g transform="translate(1599 460)"><path d="M-11 6A11 11 0 0 1 11 6H5A6 6 0 0 0-5 6Z" fill="#7ab8ee" stroke="#2b7fbd"/><path d="M-11 6A11 11 0 0 1-4-4L-1 1A6 6 0 0 0-5 6Z" fill="#fff" stroke="#444"/><path d="M0 5L5-2" stroke="#444" stroke-width="2"/></g>
<g transform="translate(1634 460)"><rect x="-11" y="-8" width="22" height="17" fill="#f3f9fe" stroke="#777"/><path d="M-8 6H8" stroke="#7ab8ee"/></g>
<text x="1624" y="464" textLength="20" lengthAdjust="spacingAndGlyphs" style="font-size:10.5px;fill:#2b88c8">123</text>
<g transform="translate(1668 460)"><rect x="-11" y="-11" width="22" height="22" fill="#fff" stroke="#555" stroke-width="1.3"/><path d="M-6-6V6" stroke="#2b7fbd" stroke-width="1.3"/><path d="M-5-4.5H6M-5-0.5H3M-5 3.5H7" stroke="#2b7fbd" stroke-width="1.6"/></g>
<!-- row 5 -->
<g transform="translate(1493 495)"><rect x="-11" y="-9" width="22" height="18" fill="#fff" stroke="#555" stroke-width="1.3"/><path d="M-7 0L-3-6L1 0Z" fill="#4fa36a"/><path d="M1-6H8L4.5 0Z" fill="#d9534f"/><path d="M-8 4H8" stroke="#aaa"/></g>
<g transform="translate(1528 495)"><rect x="-11" y="-10" width="21" height="21" fill="#fff" stroke="#555" stroke-width="1.2"/><rect x="-11" y="-10" width="21" height="3.5" fill="#777"/><rect x="-8" y="-3" width="5" height="3" fill="#888"/><rect x="-8" y="3" width="5" height="3" fill="#888"/><path d="M-2 1H12L7 7V12L3 10V7Z" fill="#fff" stroke="#555" stroke-width="1.2"/></g>
<g transform="translate(1563 495)"><rect x="-11" y="-10" width="22" height="21" fill="#fff" stroke="#666" stroke-width="1.2"/><rect x="-11" y="-10" width="22" height="4" fill="#888"/><path d="M-4-6V11M4-6V11M-11 0H11M-11 5.5H11" stroke="#888"/></g>
<g transform="translate(1598 495)"><rect x="-11" y="-10" width="22" height="21" fill="#fff" stroke="#555" stroke-width="1.2"/><rect x="-11" y="-10" width="22" height="4" fill="#666"/><rect x="-11" y="0" width="8" height="5" fill="#5da8e6"/><rect x="4" y="-6" width="7" height="6" fill="#5da8e6"/><rect x="-4" y="5" width="15" height="6" fill="#5da8e6"/><rect x="-11" y="5" width="7" height="6" fill="#5da8e6"/><path d="M-4-6V11M4-6V11M-11 0H11M-11 5.5H11" stroke="#fff" stroke-width=".8"/></g>
<text x="1626" y="503" style="font-size:20px;font-weight:bold;fill:#2b88c8" textLength="13" lengthAdjust="spacingAndGlyphs">R</text>
<text x="1656" y="502" style="font-size:23px;font-weight:bold;fill:#2b88c8" textLength="24" lengthAdjust="spacingAndGlyphs">Py</text>
<!-- row 6 -->
<g transform="translate(1493 530)"><path class="k" d="M-11-11V11H11"/><path d="M-11-6H4" stroke="#2b7fbd" stroke-width="1.3"/><circle cx="7" cy="-7" r="3" fill="#7ab8ee" stroke="#2b7fbd"/><path d="M-11-0.5H-1" stroke="#888" stroke-width="1.3"/><circle cx="1" cy="-0.5" r="2" fill="#bbb" stroke="#666"/><path d="M-11 5H-4" stroke="#888" stroke-width="1.3"/><circle cx="-3" cy="5" r="2" fill="#bbb" stroke="#666"/></g>
<g transform="translate(1528 530)"><rect class="B" x="-11" y="-3" width="9" height="6"/><path class="k" d="M-2 0H1M1-8V8M1-8H3M1 0H3M1 8H3"/><rect class="B" x="3" y="-11" width="8" height="6"/><rect class="B" x="3" y="-3" width="8" height="6"/><rect class="B" x="3" y="5" width="8" height="6"/></g>
<g transform="translate(1563 530)"><path d="M-11-10H11V6H-5L-7 11L-9 6H-11Z" fill="#fff" stroke="#2b7fbd" stroke-width="1.4"/></g>
<g transform="translate(1599 530)"><path d="M-7-11H3L9-5V11H-7Z" fill="#fff" stroke="#555" stroke-width="1.1"/><circle cx="-8" cy="-4" r="2" fill="#fff" stroke="#2b7fbd"/><path d="M-3-4H5M-3 0H5M-3 3H2" stroke="#2b7fbd"/></g>
<g transform="translate(1633 530)"><path d="M-9-11H3L9-5V11H-9Z" fill="#fff" stroke="#444" stroke-width="1.2"/><rect x="-5" y="3" width="3" height="5" fill="#444"/><rect x="-1" y="1" width="3" height="7" fill="#444"/><rect x="3" y="-3" width="3" height="11" fill="#444"/></g>
<g transform="translate(1668 530)"><rect x="-11" y="-9" width="22" height="20" fill="#cfe6f7" stroke="#2b7fbd" stroke-width="1.5"/><path d="M-5 10L0-3L3-4L8-8" fill="none" stroke="#2b7fbd" stroke-width="2.4"/><path d="M-12-10H-4V-3L-8 2L-12-3Z" fill="#d9822b"/><circle cx="11" cy="1" r="2.5" fill="#d9822b"/><circle cx="8" cy="8" r="3.5" fill="#d9822b"/></g>
<!-- row 7 -->
<g transform="translate(1493 565)"><path d="M0-11L11 0L0 11L-11 0ZM-5.5-5.5L5.5 5.5M5.5-5.5L-5.5 5.5" fill="none" stroke="#9146b3" stroke-width="1.4"/><path d="M0-6L5-1" stroke="#9146b3"/></g>
<g transform="translate(1528 565)"><path d="M-11-11H3L11 0L3 11H-11L-3 0ZM-3-11L5 0L-3 11" fill="none" stroke="#2b88c8" stroke-width="1.4"/><path d="M-6 6L2-5" stroke="#2b88c8" stroke-width="1.4"/></g>
<circle cx="1556" cy="564" r="1.2" fill="#444"/><circle cx="1563.5" cy="564" r="1.2" fill="#444"/><circle cx="1571" cy="564" r="1.2" fill="#444"/>

<!-- wells -->
<path d="M1468 591.5H1694" stroke="#e1dfdd"/>
<rect x="1686" y="595" width="8" height="303" rx="3" fill="#d0d0d0"/>
<text x="1484" y="617.6" textLength="38.7" lengthAdjust="spacingAndGlyphs" class="p">X-axis</text>
<rect class="d" x="1474.5" y="630.5" width="211" height="45"/>
<rect class="pl" x="1478.5" y="635.5" width="204" height="27" rx="2"/>
<text x="1484" y="655" textLength="87.7" lengthAdjust="spacingAndGlyphs" class="f">Month Name</text>
<path d="M1644.5 646L1651.3 652.5L1658.3 646M1666.7 644.5L1676 653.5M1676 644.5L1666.7 653.5" fill="none" stroke="#555" stroke-width="1.1"/>
<text x="1484" y="703.6" textLength="38.3" lengthAdjust="spacingAndGlyphs" class="p">Y-axis</text>
<rect class="d" x="1474.5" y="716.5" width="211" height="45"/>
<rect class="pl" x="1478.5" y="721.5" width="204" height="28" rx="2"/>
<text x="1484" y="741" textLength="84.3" lengthAdjust="spacingAndGlyphs" class="f">Sum of Sales</text>
<path d="M1644.5 732L1651.3 738.5L1658.3 732M1666.7 730.5L1676 739.5M1676 730.5L1666.7 739.5" fill="none" stroke="#555" stroke-width="1.1"/>
<text x="1484" y="791" textLength="48" lengthAdjust="spacingAndGlyphs" class="p">Legend</text>
<rect class="d" x="1474.5" y="802.5" width="211" height="34"/>
<text x="1488" y="825" textLength="132.7" lengthAdjust="spacingAndGlyphs" class="f">Add data fields here</text>
<text x="1484" y="866" textLength="100" lengthAdjust="spacingAndGlyphs" class="p">Small multiples</text>
<rect class="d" x="1474.5" y="877.5" width="211" height="34"/>
<text x="1488" y="900" textLength="132.7" lengthAdjust="spacingAndGlyphs" class="f">Add data fields here</text>
<text x="1484" y="941" textLength="51.3" lengthAdjust="spacingAndGlyphs" class="p">Tooltips</text>
<rect class="d" x="1474.5" y="952.5" width="211" height="34"/>
<text x="1488" y="975" textLength="132.7" lengthAdjust="spacingAndGlyphs" class="f">Add data fields here</text>

<!-- fields pane -->
<rect x="1700.5" y="257.5" width="214" height="31.5" rx="2" fill="#fff" stroke="#666"/>
<circle cx="1723" cy="271" r="6" fill="none" stroke="#333" stroke-width="1.2"/><path d="M1718.5 275.5L1711 283" stroke="#333" stroke-width="1.3"/>
<text x="1736.5" y="280.8" textLength="51" lengthAdjust="spacingAndGlyphs" style="font-size:16px;fill:#555">Search</text>
<path d="M1706 313.5L1711.5 319.5L1717 313.5" fill="none" stroke="#666" stroke-width="1.1"/>
<rect x="1723" y="309.5" width="15.5" height="14" fill="none" stroke="#444" stroke-width="1.2"/><rect x="1723" y="309.5" width="15.5" height="3" fill="#666"/><path d="M1728 312V323.5M1733.5 312V323.5M1723 316H1738.5M1723 320H1738.5" stroke="#666"/>
<circle cx="1738.7" cy="323.3" r="7.5" fill="#f2c811"/><path d="M1735.5 323.5L1738 326L1742 321.5" fill="none" stroke="#333" stroke-width="1.3"/>
<text x="1746.7" y="321.7" textLength="60.3" lengthAdjust="spacingAndGlyphs" class="f">financials</text>
<!-- checkboxes -->
<g class="cb"><rect x="1743.5" y="369.5" width="14.5" height="14.5" rx="2.5"/><rect x="1743.5" y="399.5" width="14.5" height="14.5" rx="2.5"/><rect x="1743.5" y="429.5" width="14.5" height="14.5" rx="2.5"/><rect x="1743.5" y="459.5" width="14.5" height="14.5" rx="2.5"/><rect x="1743.5" y="489.5" width="14.5" height="14.5" rx="2.5"/><rect x="1743.5" y="519.5" width="14.5" height="14.5" rx="2.5"/><rect x="1743.5" y="549.5" width="14.5" height="14.5" rx="2.5"/><rect x="1743.5" y="609.5" width="14.5" height="14.5" rx="2.5"/><rect x="1743.5" y="639.5" width="14.5" height="14.5" rx="2.5"/><rect x="1743.5" y="669.5" width="14.5" height="14.5" rx="2.5"/><rect x="1743.5" y="699.5" width="14.5" height="14.5" rx="2.5"/><rect x="1743.5" y="729.5" width="14.5" height="14.5" rx="2.5"/><rect x="1743.5" y="759.5" width="14.5" height="14.5" rx="2.5"/><rect x="1743.5" y="789.5" width="14.5" height="14.5" rx="2.5"/></g>
<rect class="cy" x="1743" y="339" width="15" height="15" rx="2.5"/><path d="M1746 346.5L1749.5 350L1755 344" fill="none" stroke="#6b5b10" stroke-width="1.1"/>
<rect class="cy" x="1743" y="579" width="15" height="15" rx="2.5"/><path d="M1746 586.5L1749.5 590L1755 584" fill="none" stroke="#6b5b10" stroke-width="1.1"/>
<!-- sigmas -->
<g class="s"><path d="M1781.5 339H1769L1776 347L1769 355.5H1781.5"/><path d="M1781.5 369H1769L1776 377L1769 385.5H1781.5"/><path d="M1781.5 489H1769L1776 497L1769 505.5H1781.5"/><path d="M1781.5 519H1769L1776 527L1769 535.5H1781.5"/><path d="M1781.5 549H1769L1776 557L1769 565.5H1781.5"/><path d="M1781.5 609H1769L1776 617L1769 625.5H1781.5"/><path d="M1781.5 669H1769L1776 677L1769 685.5H1781.5"/><path d="M1781.5 699H1769L1776 707L1769 715.5H1781.5"/><path d="M1781.5 759H1769L1776 767L1769 775.5H1781.5"/><path d="M1781.5 789H1769L1776 797L1769 805.5H1781.5"/></g>
<path d="M1726.5 431L1733 437L1726.5 443" fill="none" stroke="#666" stroke-width="1.1"/>
<rect x="1765.5" y="428.5" width="19" height="16" fill="none" stroke="#555" stroke-width="1.2"/><path d="M1765.5 432.5H1784.5" stroke="#555"/><path d="M1770 426.5V430M1780 426.5V430" stroke="#555"/><path d="M1768 436H1782M1768 439H1782M1768 442H1782" stroke="#777" stroke-dasharray="1.5 1"/>
<text class="f" x="1790.3" y="352" textLength="32.7" lengthAdjust="spacingAndGlyphs">Sales</text>
<text class="f" x="1790.3" y="382" textLength="37.3" lengthAdjust="spacingAndGlyphs">COGS</text>
<text class="f" x="1790.3" y="412" textLength="52" lengthAdjust="spacingAndGlyphs">Country</text>
<text class="f" x="1790.3" y="442" textLength="30.3" lengthAdjust="spacingAndGlyphs">Date</text>
<text class="f" x="1790.3" y="472" textLength="94.7" lengthAdjust="spacingAndGlyphs">Discount Band</text>
<text class="f" x="1790.3" y="502" textLength="64" lengthAdjust="spacingAndGlyphs">Discounts</text>
<text class="f" x="1790.3" y="532" textLength="74" lengthAdjust="spacingAndGlyphs">Gross Sales</text>
<text class="f" x="1790.3" y="562" textLength="119.7" lengthAdjust="spacingAndGlyphs">Manufacturing P...</text>
<text class="f" x="1790.3" y="592" textLength="87.3" lengthAdjust="spacingAndGlyphs">Month Name</text>
<text class="f" x="1790.3" y="622" textLength="102.7" lengthAdjust="spacingAndGlyphs">Month Number</text>
<text class="f" x="1790.3" y="652" textLength="51.7" lengthAdjust="spacingAndGlyphs">Product</text>
<text class="f" x="1790.3" y="682" textLength="35.7" lengthAdjust="spacingAndGlyphs">Profit</text>
<text class="f" x="1790.3" y="712" textLength="63" lengthAdjust="spacingAndGlyphs">Sale Price</text>
<text class="f" x="1790.3" y="742" textLength="58.7" lengthAdjust="spacingAndGlyphs">Segment</text>
<text class="f" x="1790.3" y="772" textLength="66.7" lengthAdjust="spacingAndGlyphs">Units Sold</text>
<text class="f" x="1790.3" y="802" textLength="27.3" lengthAdjust="spacingAndGlyphs">Year</text>

<!-- page tabs -->
<rect x="51" y="956" width="1417" height="44" fill="#f3f2f1"/>
<path d="M1468.5 956V1000" stroke="#d8d6d4"/>
<path d="M50.5 956V1000M100.5 956V1000M196.5 956V1000M292.5 956V1000M388.5 956V1000" stroke="#c8c6c4"/>
<path d="M64 972V982L58 977Z" fill="#c8c6c4"/><path d="M87 972V982L92.5 977Z" fill="#c8c6c4"/>
<rect x="293" y="956" width="95" height="39" fill="#fff"/><rect x="293" y="995" width="96" height="5" fill="#f2c811"/>
<rect x="389.5" y="958" width="48.5" height="40" fill="#f2c811"/>
<path d="M413.7 971.5V985M406.7 978.3H420.7" stroke="#6b6b6b" stroke-width="4"/>
<text x="127" y="983" textLength="42.7" lengthAdjust="spacingAndGlyphs" class="p">Page 1</text>
<text x="222.3" y="983" textLength="43.7" lengthAdjust="spacingAndGlyphs" class="p">Page 2</text>
<text x="318.3" y="983" textLength="44" lengthAdjust="spacingAndGlyphs" class="p" style="fill:#252423">Page 3</text>

<!-- status bar -->
<path d="M0 1000.5H1920" stroke="#e1dfdd"/>
<text x="6.7" y="1020.7" textLength="73.3" lengthAdjust="spacingAndGlyphs" class="f">Page 3 of 3</text>
<path d="M1644 1016H1649.5" stroke="#555" stroke-width="2"/>
<path d="M1655 1015.7H1780" stroke="#666" stroke-width="1.3"/>
<rect x="1704" y="1009.3" width="5" height="13.4" fill="#666"/><rect x="1717.3" y="1013" width="1.8" height="6.5" fill="#666"/>
<path d="M1787.7 1016.3H1797M1792.3 1011.5V1021" stroke="#555" stroke-width="2"/>
<text x="1818.7" y="1020.7" textLength="28" lengthAdjust="spacingAndGlyphs" style="font-size:14.5px;fill:#777">83%</text>
<rect x="1871.8" y="1008.8" width="19.4" height="14.5" fill="none" stroke="#777" stroke-width="1.3"/>
<path d="M1878 1012H1875V1020H1878M1885 1012H1888V1020H1885" fill="none" stroke="#555"/>
</svg>
</body></html>
